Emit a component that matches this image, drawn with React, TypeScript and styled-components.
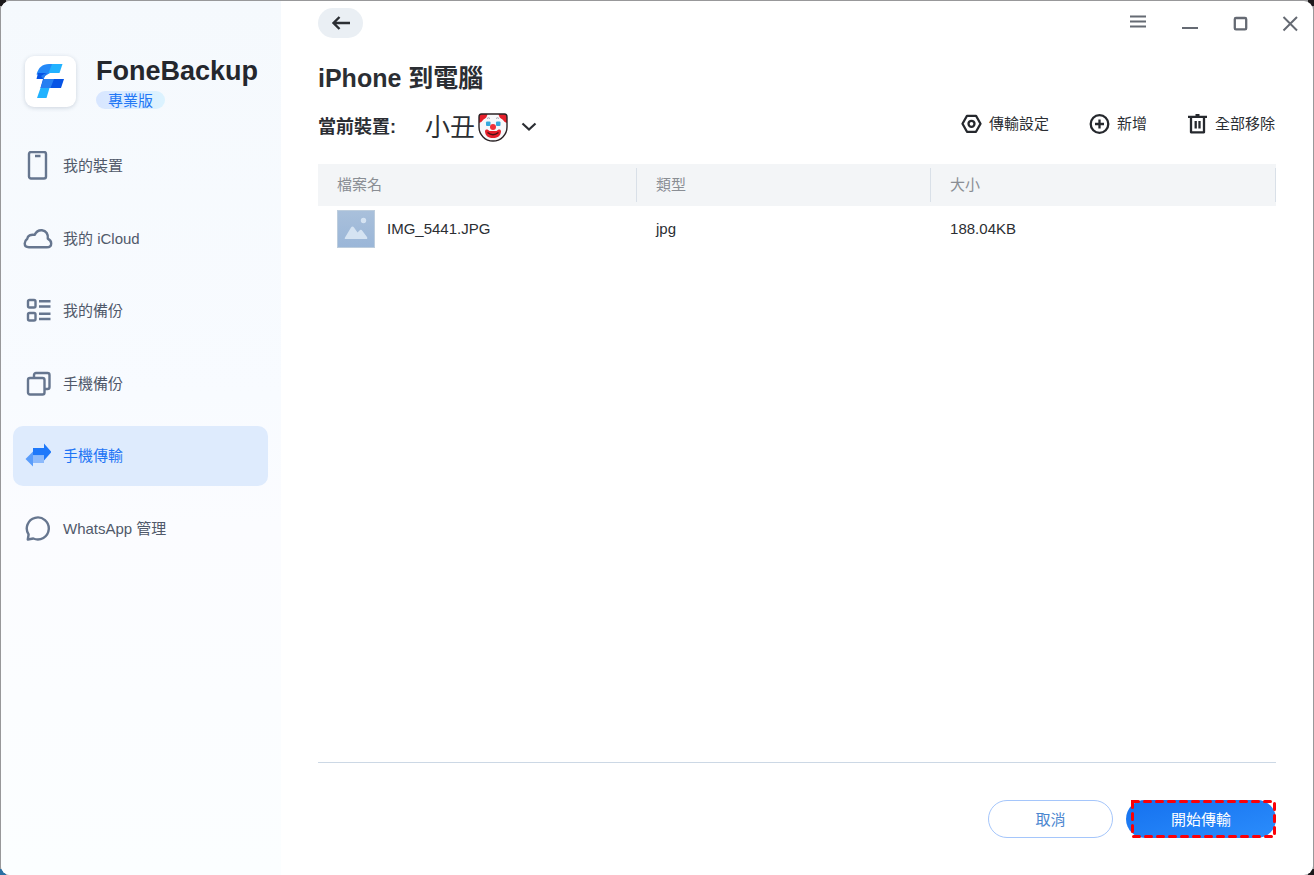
import React from "react";
import styled, { createGlobalStyle } from "styled-components";

const GlobalStyle = createGlobalStyle`
  *, *::before, *::after { box-sizing: border-box; }
  body {
    margin: 0;
    font-family: "Liberation Sans", "Noto Sans CJK TC", sans-serif;
    font-size: 15px;
    line-height: 20px;
    color: #2b2e33;
  }
  button { font: inherit; color: inherit; }
  svg { display: block; flex: none; }
`;

const Desktop = styled.div`
  min-height: 100vh;
  padding: 1px 1px 0;
  display: flex;
  background:
    linear-gradient(#1d1a1c, #1d1a1c) top left / 6px 6px no-repeat,
    linear-gradient(#1d1a1c, #1d1a1c) top right / 6px 6px no-repeat,
    linear-gradient(#2a70a4, #2a70a4) bottom left / 6px 6px no-repeat,
    linear-gradient(#1d1a1c, #1d1a1c) bottom right / 6px 6px no-repeat,
    #98989a;
`;

const AppWindow = styled.div`
  flex: 1;
  display: flex;
  min-width: 0;
  border-radius: 9px;
  overflow: hidden;
  background: #fff;
`;

const Sidebar = styled.aside`
  flex: none;
  width: 280px;
  padding: 54px 13px 0 12px;
  background: linear-gradient(#f5f9fd, #f8fbff 45%, #fbfcff 60%, #fbfeff);
`;

const Brand = styled.div`
  display: flex;
  gap: 20px;
  padding-left: 12px;
  height: 81px;
`;

const LogoTile = styled.div`
  flex: none;
  width: 51px;
  height: 51px;
  margin-top: 1px;
  border-radius: 9px;
  background: #fff;
  box-shadow: 0 1px 4px rgba(60, 80, 110, 0.22);
`;

const BrandText = styled.div`
  display: flex;
  flex-direction: column;
  align-items: flex-start;
  gap: 4px;
`;

const BrandName = styled.div`
  font-size: 27px;
  line-height: 32px;
  font-weight: bold;
  color: #24272d;
`;

const Badge = styled.span`
  padding: 0 12px;
  height: 18px;
  line-height: 20px;
  border-radius: 9px;
  color: #2277f5;
  background: linear-gradient(90deg, #d8e6ff, #dcf3ff);
`;

const Nav = styled.nav`
  display: flex;
  flex-direction: column;
  justify-content: space-between;
  height: 423px;
`;

const NavLink = styled.a<{ $active?: boolean }>`
  display: flex;
  align-items: center;
  gap: 12px;
  height: 60px;
  padding-left: 12px;
  border-radius: 10px;
  text-decoration: none;
  color: ${(p) => (p.$active ? "#1d74f5" : "#50596a")};
  background: ${(p) => (p.$active ? "#deebfd" : "transparent")};
`;

const Main = styled.main`
  flex: 1;
  min-width: 0;
  display: flex;
  flex-direction: column;
  padding: 0 37px;
`;

const TitleBar = styled.header`
  display: flex;
  justify-content: space-between;
  align-items: center;
  height: 44px;
  margin-right: -24px;
`;

const BackButton = styled.button`
  display: flex;
  align-items: center;
  justify-content: center;
  width: 45px;
  height: 30px;
  padding: 0;
  border: 0;
  border-radius: 15px;
  background: #eaeff4;
`;

const WindowControls = styled.div`
  display: flex;
  gap: 30px;
`;

const WindowButton = styled.button`
  width: 20px;
  height: 20px;
  padding: 0;
  border: 0;
  background: none;
  color: #656a73;
`;

const Title = styled.h1`
  margin: 16px 0 0;
  font-size: 25px;
  line-height: 34px;
  font-weight: bold;
`;

const DeviceBar = styled.div`
  display: flex;
  align-items: flex-start;
  justify-content: space-between;
  margin: 12px 0 17px;
`;

const DevicePicker = styled.div`
  display: flex;
  align-items: center;
  height: 40px;
`;

const DeviceLabel = styled.span`
  font-size: 18px;
  line-height: 24px;
  font-weight: bold;
  margin-right: 29px;
`;

const DeviceButton = styled.button`
  display: flex;
  align-items: center;
  gap: 3px;
  padding: 0;
  border: 0;
  background: none;
  font-size: 25px;
  line-height: 34px;
`;

const ChevronSlot = styled.span`
  margin-left: 10px;
`;

const Actions = styled.div`
  display: flex;
  gap: 40px;
  padding-right: 1px;
`;

const ActionButton = styled.button`
  display: flex;
  align-items: center;
  gap: 7px;
  padding: 0;
  border: 0;
  background: none;
  height: 34px;
`;

const FileTable = styled.table`
  width: 100%;
  table-layout: fixed;
  border-collapse: collapse;
  text-align: left;
`;

const HeadCell = styled.th<{ $width: string }>`
  width: ${(p) => p.$width};
  height: 42px;
  padding: 0;
  background: #f3f5f7;
  font-weight: normal;
  color: #8a8e94;
`;

const HeadLabel = styled.div`
  padding-left: 19px;
  line-height: 34px;
  border-right: 1px solid #d9e0e8;
`;

const Cell = styled.td`
  height: 46px;
  padding: 0 0 0 19px;
`;

const FileName = styled.div`
  display: flex;
  align-items: center;
  gap: 12px;
`;

const Footer = styled.footer`
  display: flex;
  justify-content: flex-end;
  gap: 13px;
  margin-top: auto;
  padding: 37px 0;
  border-top: 1px solid #ccd8e5;
`;

const CancelButton = styled.button`
  width: 125px;
  height: 38px;
  padding: 2px 0 0;
  border: 1px solid #a5c6fb;
  border-radius: 19px;
  background: #fff;
  color: #4a86cf;
`;

const StartButton = styled.button`
  position: relative;
  width: 150px;
  height: 38px;
  padding: 2px 0 0;
  border: 0;
  border-radius: 19px;
  background: linear-gradient(165deg, #1571ef, #2b8dfc);
  color: #fff;
`;

const Highlight = styled.svg`
  position: absolute;
  top: 0;
  right: 0;
`;

const navStroke = { fill: "none", stroke: "#66768f", strokeWidth: 2.4, strokeLinejoin: "round" as const };

const PhoneIcon = () => (
  <svg width="26" height="30" viewBox="0 0 26 30" {...navStroke}>
    <rect x="4" y="1" width="17" height="26.500" rx="2" />
    <path d="M10 5H15.500" />
  </svg>
);
const CloudIcon = () => (
  <svg width="26" height="26" viewBox="0 0 26 26" overflow="visible" {...navStroke}>
    <path d="M4 21.200C1.200 21.200 -.300 19.800 -.300 17.500C-.300 14.800 1.200 13.600 2.300 12.700C2.600 9.700 5.800 8.200 9.600 8.900C11.300 5.500 13.800 4 17 4.300C21.200 4.700 23.400 8.300 22.800 12.600C25.200 13.900 26.200 15.300 26.200 17.400C26.200 19.800 24.600 21.200 21.800 21.200Z" />
  </svg>
);
const ListIcon = () => (
  <svg width="26" height="26" viewBox="0 0 26 26" {...navStroke}>
    <rect x="3" y="2" width="7.500" height="7.500" rx="1.500" />
    <rect x="3" y="15" width="7.500" height="7.500" rx="1.500" />
    <path d="M14 3.200H25.500M14 8.500H25.500M14 15.800H25.500M14 21H25.500" />
  </svg>
);
const CopyIcon = () => (
  <svg width="26" height="26" viewBox="0 0 26 26" {...navStroke}>
    <rect x="3" y="7" width="16.500" height="16.500" rx="2" />
    <path d="M9 6.500V4a2 2 0 0 1 2-2H22.500a2 2 0 0 1 2 2V16a2 2 0 0 1-2 2H20" />
  </svg>
);
const TransferIcon = () => (
  <svg width="26" height="26" viewBox="0 0 26 26">
    <path d="M8 5H19V.500L26.500 9L19 17.500V12.500H8Z" fill="#1e78fa" />
    <path d="M8 12.500H19V20H8Z" fill="#8dbafb" />
    <path d="M8 8.500V23.500L.500 16Z" fill="#5a9dfb" />
  </svg>
);
const ChatIcon = () => (
  <svg width="26" height="26" viewBox="0 0 26 26" {...navStroke}>
    <path d="M2.800 23.500L3.600 18.500A11 11 0 1 1 8.300 22.500Z" />
  </svg>
);

const Logo = () => (
  <svg width="51" height="51" viewBox="0 0 51 51">
    <path d="M11.500 18.500C13.500 11.500 17 8 24 8H30L25 17L20 20Z" fill="#2489f8" />
    <path d="M27 8H37.500L34.500 17H23.500Z" fill="#21b2ff" />
    <path d="M13 17H21.500L18.500 23H11.500Z" fill="#0754e5" />
    <path d="M18 23H39L36 32H15.500Z" fill="#0754e5" />
    <path d="M16 20L21 17L18.500 23H29L25.500 32H15.500L18.500 23Z" fill="#267ff2" />
    <path d="M15.500 32H24.500L21.500 42H12Z" fill="#21b2ff" />
  </svg>
);

const Clown = () => (
  <svg width="30" height="30" viewBox="0 0 30 30" role="img" aria-label="小丑">
    <path d="M3.500 2H26.500Q29 2 29 5V15A14 14 0 0 1 1 15V5Q1 2 3.500 2Z" fill="#f7f8fa" />
    <path d="M3.500 2H9.500Q9 6 5.500 7.500Q4 10 1 11V5Q1 2 3.500 2ZM26.500 2H20.500Q21 6 24.500 7.500Q26 10 29 11V5Q29 2 26.500 2Z" fill="#e5202b" />
    <path d="M3.500 2H26.500Q29 2 29 5V15A14 14 0 0 1 1 15V5Q1 2 3.500 2Z" fill="none" stroke="#2a2225" strokeWidth="1.400" />
    <path d="M9 6.500Q10.500 5 12 6.500M18 6.500Q19.500 5 21 6.500" fill="none" stroke="#9aa4b0" />
    <rect x="8" y="9.500" width="4.500" height="4.500" rx="1" fill="#35a9dd" />
    <rect x="18" y="9.500" width="4.500" height="4.500" rx="1" fill="#35a9dd" />
    <path d="M7 19.500C7 16.500 10 17 11.500 19H18.500C20 17 23 16.500 23 19.500C22.500 24.500 19 26 15 26S7.500 24.500 7 19.500Z" fill="#e5202b" />
    <path d="M9.500 20.500Q15 25 20.500 20.500" fill="none" stroke="#4b1418" strokeWidth="1.500" />
    <circle cx="15" cy="15" r="3" fill="#ef3039" />
  </svg>
);

const Thumbnail = () => (
  <svg width="38" height="38" viewBox="0 0 38 38">
    <defs>
      <linearGradient id="thumb" x1="0" y1="0" x2="0" y2="1">
        <stop offset="0" stopColor="#a9c0db" />
        <stop offset="1" stopColor="#9ab6d8" />
      </linearGradient>
    </defs>
    <rect x=".5" y=".5" width="37" height="37" fill="url(#thumb)" stroke="#bdcddd" />
    <circle cx="26.500" cy="10.500" r="2.700" fill="#d5e3f2" />
    <path d="M8 27.500L14 17.500Q15.500 15.500 17 17.500L20.500 22.500L22.500 20.500Q24 19 25.500 21L30 27Q31 29 29 29H9Q7 29 8 27.500Z" fill="#d5e3f2" />
  </svg>
);

const darkStroke = { fill: "none", stroke: "#25282d", strokeWidth: 2.3, strokeLinejoin: "round" as const };

const SettingsIcon = () => (
  <svg width="21" height="21" viewBox="0 0 21 21" {...darkStroke}>
    <path d="M6 1.800H15L19.500 9.800L15 17.800H6L1.500 9.800Z" />
    <circle cx="10.500" cy="9.800" r="3" />
  </svg>
);
const AddIcon = () => (
  <svg width="21" height="21" viewBox="0 0 21 21" {...darkStroke}>
    <circle cx="10.500" cy="10" r="8.800" />
    <path d="M10.500 5.500V14.500M6 10H15" />
  </svg>
);
const TrashIcon = () => (
  <svg width="21" height="21" viewBox="0 0 21 21" {...darkStroke}>
    <path d="M1 2.800H20M8.500 1H12.500M4 3.500V18.300H17V3.500M8.700 7V14.500M12.500 7V14.500" />
  </svg>
);

const navItems = [
  { label: "我的裝置", icon: <PhoneIcon /> },
  { label: "我的 iCloud", icon: <CloudIcon /> },
  { label: "我的備份", icon: <ListIcon /> },
  { label: "手機備份", icon: <CopyIcon /> },
  { label: "手機傳輸", icon: <TransferIcon />, active: true },
  { label: "WhatsApp 管理", icon: <ChatIcon /> },
];

const windowButtons = [
  { label: "選單", path: "M0 3.500H16M0 8.500H16M0 13.500H16", width: 2.2 },
  { label: "最小化", path: "M2 15H18", width: 2.2 },
  { label: "最大化", path: "M6 5H15A1.200 1.200 0 0 1 16.200 6.200V15.200A1.200 1.200 0 0 1 15 16.400H6A1.200 1.200 0 0 1 4.800 15.200V6.200A1.200 1.200 0 0 1 6 5Z", width: 2.3 },
  { label: "關閉", path: "M3.500 4L17 17.500M17 4L3.500 17.500", width: 2 },
];

const actions = [
  { label: "傳輸設定", icon: <SettingsIcon /> },
  { label: "新增", icon: <AddIcon /> },
  { label: "全部移除", icon: <TrashIcon /> },
];

const columns = [
  { label: "檔案名", width: "33.3%" },
  { label: "類型", width: "30.7%" },
  { label: "大小", width: "36%" },
];

const files = [{ name: "IMG_5441.JPG", type: "jpg", size: "188.04KB" }];

export default function App() {
  return (
    <Desktop>
      <GlobalStyle />
      <AppWindow>
        <Sidebar>
          <Brand>
            <LogoTile><Logo /></LogoTile>
            <BrandText>
              <BrandName>FoneBackup</BrandName>
              <Badge>專業版</Badge>
            </BrandText>
          </Brand>
          <Nav>
            {navItems.map((item) => (
              <NavLink key={item.label} href="#" $active={item.active}>
                {item.icon}
                {item.label}
              </NavLink>
            ))}
          </Nav>
        </Sidebar>
        <Main>
          <TitleBar>
            <BackButton aria-label="返回">
              <svg width="20" height="16" viewBox="0 0 20 16" fill="none" stroke="#2b2e33" strokeWidth="2.400">
                <path d="M19 8H2.500M8.500 2L2.500 8L8.500 14" />
              </svg>
            </BackButton>
            <WindowControls>
              {windowButtons.map((b) => (
                <WindowButton key={b.label} aria-label={b.label}>
                  <svg width="20" height="20" viewBox="0 0 20 20" fill="none" stroke="currentColor" strokeWidth={b.width} strokeLinejoin="round">
                    <path d={b.path} />
                  </svg>
                </WindowButton>
              ))}
            </WindowControls>
          </TitleBar>
          <Title>iPhone 到電腦</Title>
          <DeviceBar>
            <DevicePicker>
              <DeviceLabel id="device-label">當前裝置:</DeviceLabel>
              <DeviceButton aria-labelledby="device-label" aria-haspopup="listbox">
                小丑
                <Clown />
                <ChevronSlot>
                  <svg width="16" height="10" viewBox="0 0 16 10" fill="none" stroke="#2b2e33" strokeWidth="2.200">
                    <path d="M1.500 1.500L8 7.500L14.500 1.500" />
                  </svg>
                </ChevronSlot>
              </DeviceButton>
            </DevicePicker>
            <Actions>
              {actions.map((a) => (
                <ActionButton key={a.label}>
                  {a.icon}
                  {a.label}
                </ActionButton>
              ))}
            </Actions>
          </DeviceBar>
          <FileTable>
            <thead>
              <tr>
                {columns.map((c) => (
                  <HeadCell key={c.label} $width={c.width} scope="col">
                    <HeadLabel>{c.label}</HeadLabel>
                  </HeadCell>
                ))}
              </tr>
            </thead>
            <tbody>
              {files.map((f) => (
                <tr key={f.name}>
                  <Cell>
                    <FileName>
                      <Thumbnail />
                      {f.name}
                    </FileName>
                  </Cell>
                  <Cell>{f.type}</Cell>
                  <Cell>{f.size}</Cell>
                </tr>
              ))}
            </tbody>
          </FileTable>
          <Footer>
            <CancelButton>取消</CancelButton>
            <StartButton>
              開始傳輸
              <Highlight width="145" height="38" viewBox="0 0 145 38" fill="none" stroke="#fb0007" strokeWidth="3">
                <rect x="1.500" y="1.500" width="142" height="35" strokeDasharray="6 6" strokeLinecap="round" />
              </Highlight>
            </StartButton>
          </Footer>
        </Main>
      </AppWindow>
    </Desktop>
  );
}
